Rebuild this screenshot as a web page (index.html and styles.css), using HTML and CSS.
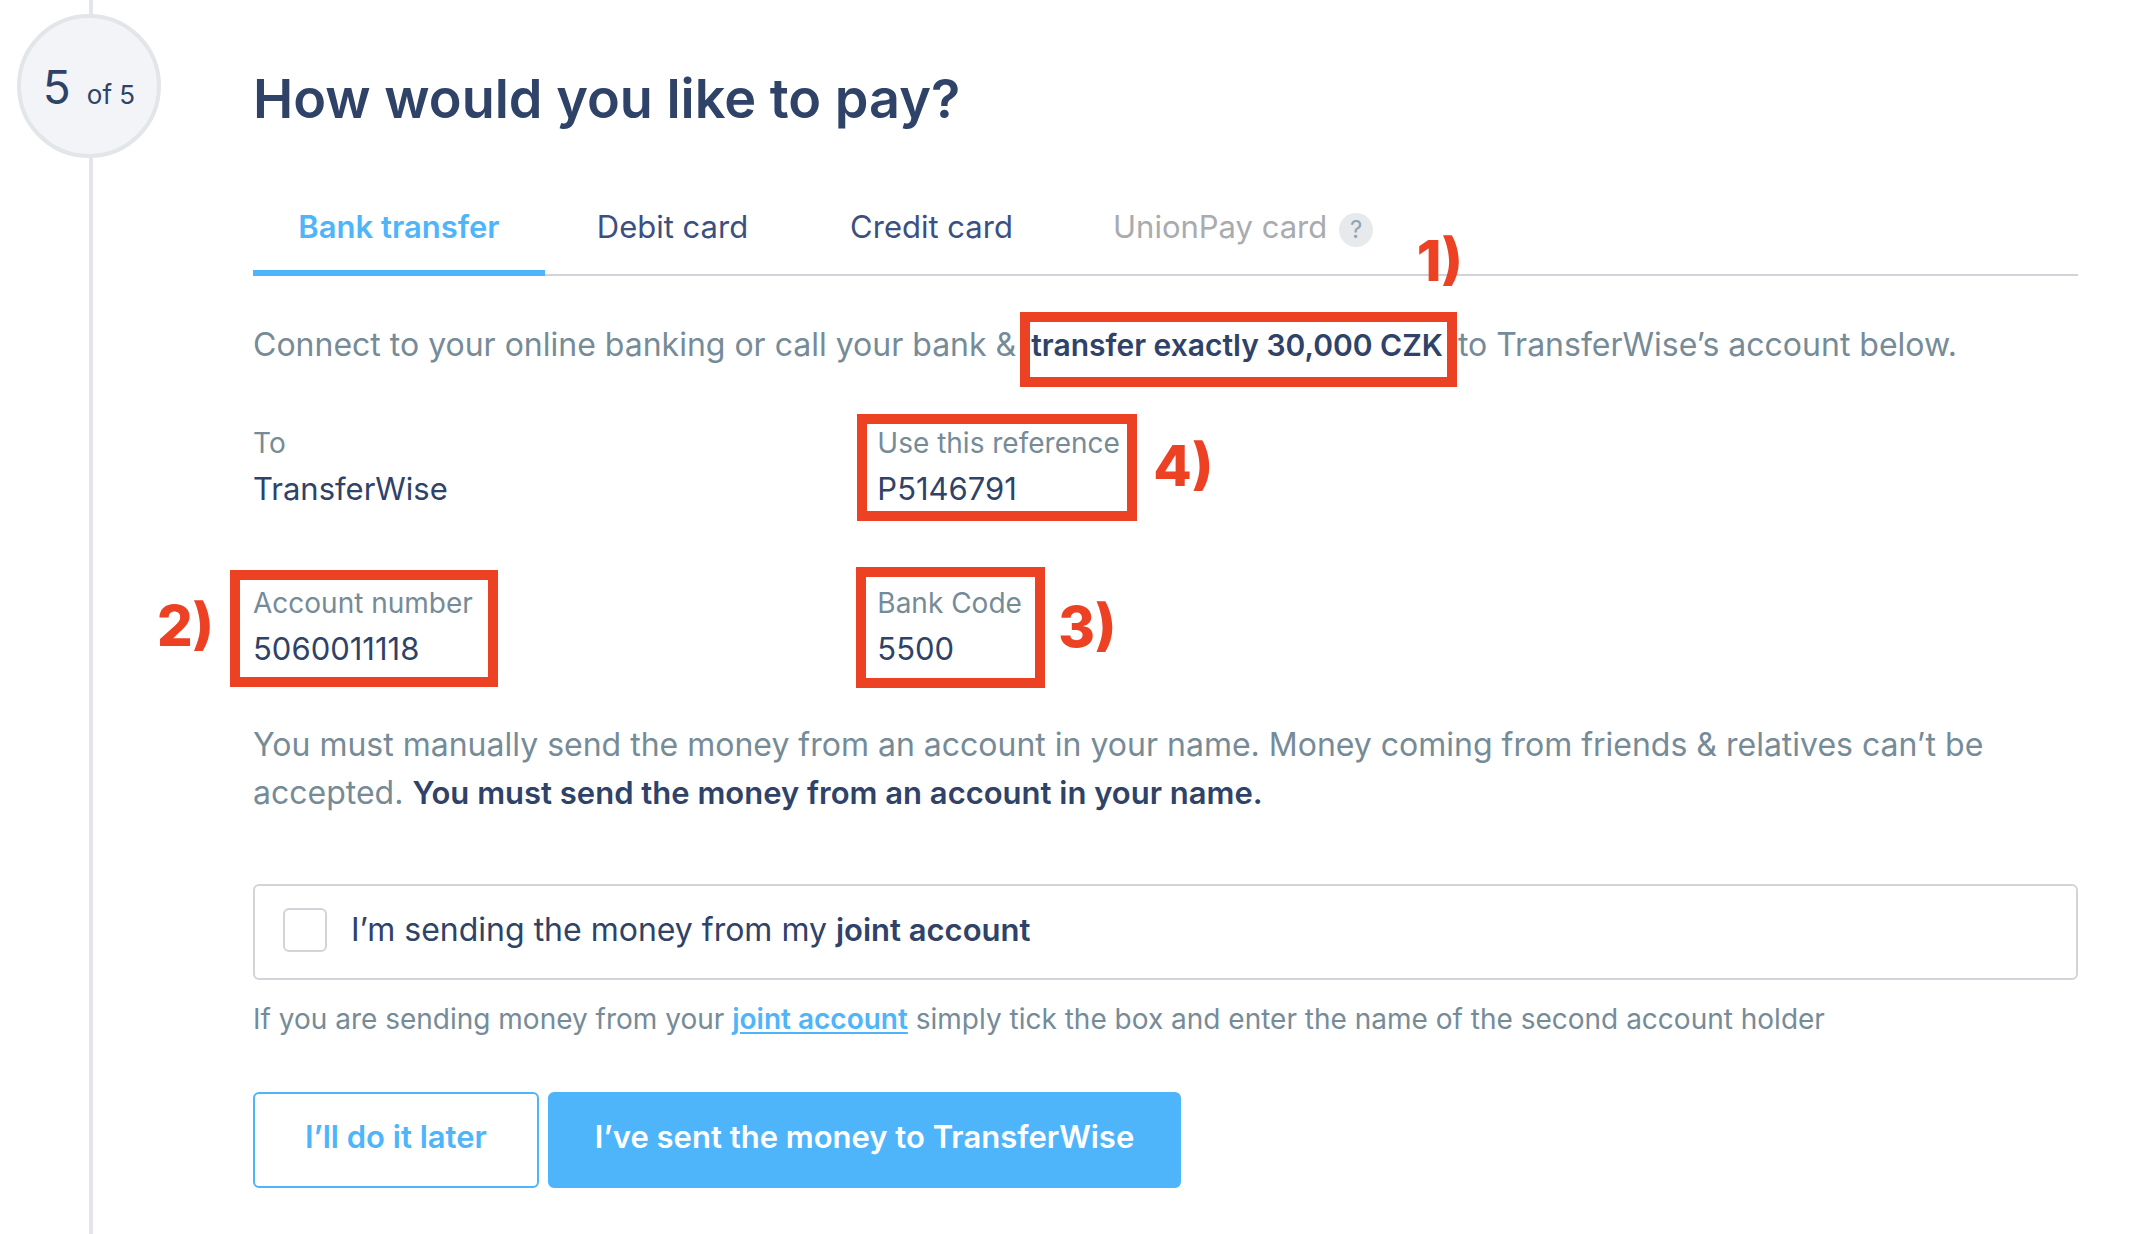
FILE: index.html
```html
<!DOCTYPE html>
<html lang="en">
<head>
<meta charset="utf-8">
<meta name="viewport" content="width=device-width, initial-scale=1">
<title>How would you like to pay?</title>
<link rel="stylesheet" href="styles.css">
</head>
<body>
<div class="page">
  <aside class="timeline">
    <div class="step"><span class="step-current">5</span><span class="step-total">of 5</span></div>
  </aside>
  <main class="content">
    <h1 class="title">How would you like to pay?</h1>

    <div class="tabs" role="tablist">
      <button class="tab tab-active" type="button" role="tab" aria-selected="true">Bank transfer</button>
      <button class="tab" type="button" role="tab" aria-selected="false">Debit card</button>
      <button class="tab" type="button" role="tab" aria-selected="false">Credit card</button>
      <button class="tab tab-disabled" type="button" role="tab" aria-selected="false" aria-disabled="true">UnionPay card <span class="help">?</span></button>
    </div>

    <p class="text intro">Connect to your online banking or call your bank &amp; <strong class="marked">transfer exactly 30,000 CZK<span class="mark mark-amount"><span class="mark-number">1)</span></span></strong> to TransferWise’s account below.</p>

    <dl class="details">
      <div class="field">
        <dt>To</dt>
        <dd>TransferWise</dd>
      </div>
      <div class="field">
        <dt>Use this reference</dt>
        <dd>P5146791<span class="mark mark-reference"><span class="mark-number">4)</span></span></dd>
      </div>
      <div class="field field-left">
        <dt>Account number</dt>
        <dd>5060011118<span class="mark mark-account"><span class="mark-number">2)</span></span></dd>
      </div>
      <div class="field">
        <dt>Bank Code</dt>
        <dd>5500<span class="mark mark-code"><span class="mark-number">3)</span></span></dd>
      </div>
    </dl>

    <p class="text">You must manually send the money from an account in your name. Money coming from friends &amp; relatives can’t be accepted. <strong>You must send the money from an account in your name.</strong></p>

    <label class="joint" for="joint">
      <input class="joint-box" type="checkbox" id="joint">
      <span class="joint-label">I’m sending the money from my <strong>joint account</strong></span>
    </label>
    <p class="hint">If you are sending money from your <a class="link" href="#joint">joint account</a> simply tick the box and enter the name of the second account holder</p>

    <div class="actions">
      <button class="button button-outline" type="button">I’ll do it later</button>
      <button class="button button-primary" type="button">I’ve sent the money to TransferWise</button>
    </div>
  </main>
</div>
</body>
</html>
```
FILE: styles.css
```css
:root {
  --navy: #2f4268;
  --slate: #768b98;
  --blue: #4fb5fa;
  --line: #d3d4da;
  --rail: #e2e6e8;
  --red: #ed4124;
}

* {
  box-sizing: border-box;
}

body {
  margin: 0;
  background: #fff;
  color: var(--navy);
  font-family: Inter, "Liberation Sans", sans-serif;
  font-size: 32px;
  line-height: 48px;
}

strong {
  color: var(--navy);
  font-size: 31px;
  font-weight: 600;
}

button {
  font-family: inherit;
  color: inherit;
  cursor: pointer;
}

.page {
  display: grid;
  grid-template-columns: 253px minmax(0, 1fr);
  min-height: 100vh;
}

/* Progress rail */
.timeline {
  position: relative;
  padding: 14px 0 0 17px;
}

.timeline::before {
  content: "";
  position: absolute;
  top: 0;
  bottom: 0;
  left: 89px;
  width: 4px;
  background: var(--rail);
}

.step {
  position: relative;
  display: flex;
  justify-content: center;
  align-items: baseline;
  gap: 16px;
  width: 144px;
  height: 144px;
  border: 4px solid var(--rail);
  border-radius: 50%;
  background: #f2f4f7;
  line-height: 138px;
}

.step-current {
  font-size: 46px;
}

.step-total {
  font-size: 26px;
}

.content {
  padding: 67px 74px 46px 0;
}

.title {
  margin: 0 0 56px;
  font-size: 54px;
  font-weight: 600;
  line-height: 64px;
}

/* Payment methods */
.tabs {
  display: grid;
  grid-template-columns: 292px 255px 263px auto 1fr;
  box-shadow: inset 0 -2px var(--line);
}

.tab {
  padding: 16px 0 19px;
  border: 0;
  border-bottom: 6px solid transparent;
  background: none;
  color: #3b5080;
  font-size: 31px;
  line-height: 48px;
}

.tab-active {
  border-color: var(--blue);
  color: var(--blue);
  font-weight: 600;
}

.tab-disabled {
  display: flex;
  align-items: center;
  gap: 12px;
  padding-left: 50px;
  color: #a9abae;
  cursor: default;
}

.help {
  width: 34px;
  height: 34px;
  margin-top: 6px;
  border-radius: 50%;
  background: #e6eaed;
  color: #93a4ae;
  font-size: 24px;
  line-height: 34px;
  text-align: center;
}

.text {
  margin: 0;
  color: var(--slate);
}

.intro {
  margin-top: 45px;
}

/* Bank details */
.details {
  display: grid;
  grid-template-columns: repeat(3, minmax(0, 1fr));
  gap: 68px 48px;
  margin: 52px 0 48px;
}

.field {
  position: relative;
}

.field-left {
  grid-column: 1;
}

dt {
  color: var(--slate);
  font-size: 28px;
  line-height: 44px;
}

dd {
  margin: 0;
  font-size: 31px;
}

/* Numbered highlights laid over the details */
.marked {
  position: relative;
  margin: 0 6px;
  font-size: 30px;
  white-space: nowrap;
}

.mark {
  position: absolute;
  border: 10px solid var(--red);
}

.mark-number {
  position: absolute;
  color: var(--red);
  font-size: 56px;
  font-weight: 800;
  line-height: 56px;
  white-space: nowrap;
}

.mark-amount {
  inset: -15px -14px -24px -11px;
}

.mark-amount .mark-number {
  right: -16px;
  bottom: 88px;
}

.mark-reference {
  top: -7px;
  left: -20px;
  width: 280px;
  height: 107px;
}

.mark-reference .mark-number {
  top: 14px;
  left: 286px;
}

.mark-account {
  top: -11px;
  left: -23px;
  width: 268px;
  height: 117px;
}

.mark-account .mark-number {
  top: 18px;
  right: 274px;
}

.mark-code {
  top: -14px;
  left: -21px;
  width: 189px;
  height: 121px;
}

.mark-code .mark-number {
  top: 22px;
  left: 192px;
}

/* Joint account */
.joint {
  display: flex;
  align-items: center;
  gap: 24px;
  margin-top: 67px;
  padding: 20px 28px 24px;
  border: 2px solid var(--line);
  border-radius: 6px;
}

.joint-box {
  appearance: none;
  flex: none;
  width: 44px;
  height: 44px;
  margin: 0;
  border: 2px solid var(--line);
  border-radius: 6px;
  background: #fff;
}

.joint-box:checked {
  background: var(--blue);
}

.hint {
  margin: 19px 0 53px;
  color: var(--slate);
  font-size: 28px;
  line-height: 40px;
}

.link {
  color: var(--blue);
  font-weight: 600;
  text-decoration-thickness: 2px;
  text-underline-offset: 3px;
}

.actions {
  display: flex;
  flex-wrap: wrap;
  gap: 9px;
}

.button {
  padding: 19px 45px 25px;
  border: 2px solid var(--blue);
  border-radius: 6px;
  font-size: 31px;
  font-weight: 600;
  line-height: 48px;
}

.button-outline {
  padding-inline: 50px;
  background: #fff;
  color: var(--blue);
}

.button-primary {
  background: var(--blue);
  color: #fff;
}
```
